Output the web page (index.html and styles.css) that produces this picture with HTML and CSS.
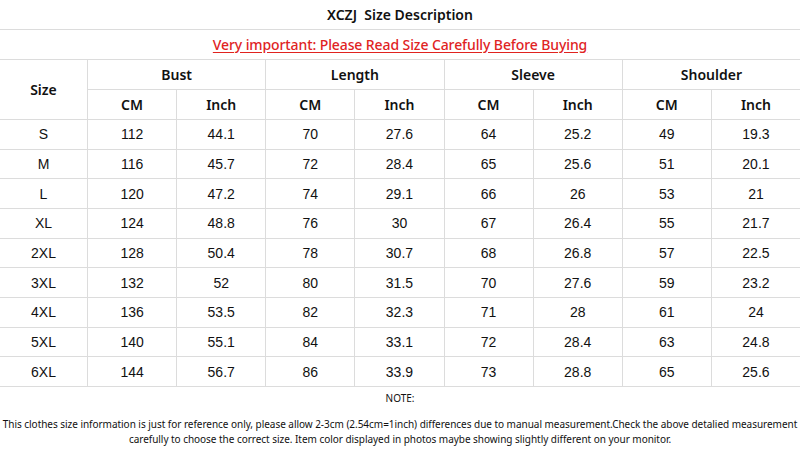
FILE: index.html
```html
<!DOCTYPE html>
<html>
<head>
<meta charset="utf-8">
<link rel="stylesheet" href="styles.css">
</head>
<body>
<div class="page">
  <div class="title">XCZJ&nbsp;&nbsp;Size Description</div>
  <div class="warn"><span>Very important: Please Read Size Carefully Before Buying</span></div>
  <div class="grid">
    <div class="h size">Size</div>
    <div class="h span2">Bust</div>
    <div class="h span2">Length</div>
    <div class="h span2">Sleeve</div>
    <div class="h span2">Shoulder</div>
    <div class="h">CM</div><div class="h">Inch</div>
    <div class="h">CM</div><div class="h">Inch</div>
    <div class="h">CM</div><div class="h">Inch</div>
    <div class="h">CM</div><div class="h">Inch</div>

    <div class="d">S</div><div class="d">112</div><div class="d">44.1</div><div class="d">70</div><div class="d">27.6</div><div class="d">64</div><div class="d">25.2</div><div class="d">49</div><div class="d">19.3</div>
    <div class="d">M</div><div class="d">116</div><div class="d">45.7</div><div class="d">72</div><div class="d">28.4</div><div class="d">65</div><div class="d">25.6</div><div class="d">51</div><div class="d">20.1</div>
    <div class="d">L</div><div class="d">120</div><div class="d">47.2</div><div class="d">74</div><div class="d">29.1</div><div class="d">66</div><div class="d">26</div><div class="d">53</div><div class="d">21</div>
    <div class="d">XL</div><div class="d">124</div><div class="d">48.8</div><div class="d">76</div><div class="d">30</div><div class="d">67</div><div class="d">26.4</div><div class="d">55</div><div class="d">21.7</div>
    <div class="d">2XL</div><div class="d">128</div><div class="d">50.4</div><div class="d">78</div><div class="d">30.7</div><div class="d">68</div><div class="d">26.8</div><div class="d">57</div><div class="d">22.5</div>
    <div class="d">3XL</div><div class="d">132</div><div class="d">52</div><div class="d">80</div><div class="d">31.5</div><div class="d">70</div><div class="d">27.6</div><div class="d">59</div><div class="d">23.2</div>
    <div class="d">4XL</div><div class="d">136</div><div class="d">53.5</div><div class="d">82</div><div class="d">32.3</div><div class="d">71</div><div class="d">28</div><div class="d">61</div><div class="d">24</div>
    <div class="d">5XL</div><div class="d">140</div><div class="d">55.1</div><div class="d">84</div><div class="d">33.1</div><div class="d">72</div><div class="d">28.4</div><div class="d">63</div><div class="d">24.8</div>
    <div class="d">6XL</div><div class="d">144</div><div class="d">56.7</div><div class="d">86</div><div class="d">33.9</div><div class="d">73</div><div class="d">28.8</div><div class="d">65</div><div class="d">25.6</div>
  </div>
  <div class="note-label">NOTE:</div>
  <p class="note">This clothes size information is just for reference only, please allow 2-3cm (2.54cm=1inch) differences due to manual measurement.Check the above detalied measurement<br>carefully to choose the correct size. Item color displayed in photos maybe showing slightly different on your monitor.</p>
</div>
</body>
</html>
```

FILE: styles.css
```css
html, body {
  margin: 0;
  padding: 0;
  background: #fff;
}
.page {
  width: 800px;
  height: 449px;
  overflow: hidden;
  color: #111;
  font-family: "Noto Sans", "Liberation Sans", sans-serif;
}
.title {
  height: 29px;
  border-bottom: 1px solid #dcdcdc;
  display: flex;
  align-items: center;
  justify-content: center;
  font-weight: 600;
  font-size: 14px;
}
.warn {
  height: 29px;
  border-bottom: 1px solid #dcdcdc;
  display: flex;
  align-items: center;
  justify-content: center;
  font-size: 14px;
  font-weight: 500;
  letter-spacing: -0.1px;
  color: #e0231f;
}
.warn span {
  text-decoration: underline;
  text-underline-offset: 2px;
}
.grid {
  display: grid;
  grid-template-columns: 87px repeat(8, 1fr);
  grid-template-rows: 29px 29px repeat(9, 28.67px);
  gap: 1px;
  background: #dcdcdc;
  padding-bottom: 1px;
}
.grid > div {
  background: #fff;
  display: flex;
  align-items: center;
  justify-content: center;
}
.h {
  font-weight: 600;
  font-size: 14px;
}
.size {
  grid-row: span 2;
}
.span2 {
  grid-column: span 2;
}
.d {
  font-family: "Liberation Sans", Arial, sans-serif;
  font-size: 14px;
}
.note-label {
  text-align: center;
  font-size: 10px;
  margin-top: 4px;
  height: 20px;
}
.note {
  margin: 6px 0 0;
  text-align: center;
  font-size: 10px;
  line-height: 15px;
  letter-spacing: -0.035px;
  white-space: nowrap;
}
```
